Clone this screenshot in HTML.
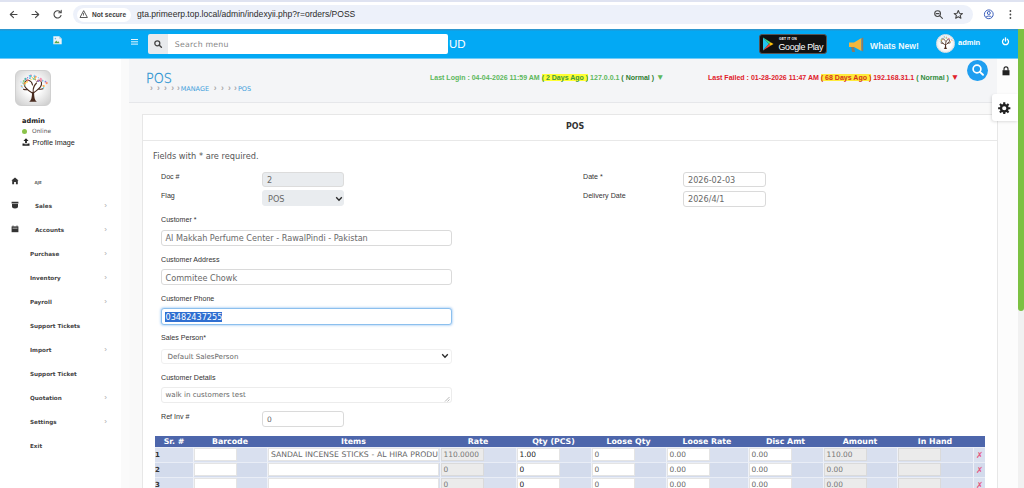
<!DOCTYPE html>
<html lang="en">
<head>
<meta charset="utf-8">
<title>POS</title>
<style>
*{box-sizing:border-box;margin:0;padding:0}
html,body{width:1024px;height:488px;overflow:hidden;background:#fff}
body{position:relative;font-family:"Liberation Sans",sans-serif;color:#333}
.abs{position:absolute}
.v{font-family:"DejaVu Sans","Liberation Sans",sans-serif}
.t{position:absolute;white-space:nowrap;line-height:1}
/* browser chrome */
#chrome{left:0;top:0;width:1024px;height:29px;background:#fff}
#tabstrip{left:0;top:0;width:1024px;height:2px;background:#dfe3f1}
#pill{left:73px;top:5px;width:900px;height:19px;border-radius:10px;background:#edf1fa}
#chip{left:77px;top:8px;width:54px;height:14px;border-radius:7px;background:#fff}
/* app header */
#hdr{left:0;top:29px;width:1018px;height:29px;background:linear-gradient(#3a93c6 0,#1a9cdc 1.2px,#03a9f4 2.4px);}
#sb{left:0;top:58px;width:121px;height:430px;background:#fff}
#strip{left:121px;top:58px;width:8px;height:430px;background:#fafafa}
#content{left:129px;top:58px;width:868px;height:45px;background:#f4f5f7;border-bottom:1px solid #e6e7ea}
#content2{left:129px;top:103px;width:868px;height:386px;background:#f9f9f9}
#rightcol{left:997px;top:58px;width:21px;height:430px;background:#fcfcfc}
#scroll{left:1018px;top:29px;width:6px;height:459px;background:#f1f1f1}
#thumb{left:1018px;top:29px;width:6px;height:282px;background:#7cc142;border-radius:0 0 3px 3px}
#panel{left:142px;top:114px;width:856px;height:380px;background:#fff;border:1px solid #e7e7e7}
#phead{left:143px;top:140px;width:854px;height:1px;background:#e8e8e8}
.lbl{font-size:8px;color:#333;margin-top:.6px;transform:scaleX(.888);transform-origin:0 0}
.inp{position:absolute;border:1px solid #dadada;border-radius:3px;background:#fff}
.inp.g{background:#e9ecef;border-color:#dcdcdc}
.itx{position:absolute;white-space:nowrap;line-height:1;font-family:"DejaVu Sans","Liberation Sans",sans-serif;font-size:8.15px;color:#686868}
.menu{position:absolute;white-space:nowrap;line-height:1;font-family:"DejaVu Sans","Liberation Sans",sans-serif;font-weight:bold;font-size:5.65px;color:#444}
.chev{position:absolute;font-size:8px;line-height:1;color:#aaa;left:104.3px}
.bc{display:inline-block;width:7.1px;text-align:center;color:#9a9a9a;font-family:"Liberation Sans",sans-serif;font-weight:bold;font-size:8.5px;line-height:6px;vertical-align:baseline;opacity:.85}
/* table */
#tbl{position:absolute;left:155px;top:436px;border-collapse:separate;border-spacing:0;table-layout:fixed;width:830px}
#tbl th{height:11px;background:#4d66ab;color:#fff;font-family:"DejaVu Sans","Liberation Sans",sans-serif;font-weight:bold;font-size:7.85px;line-height:11px;text-align:center;padding:0}
#tbl td{height:15px;padding:0;position:relative;font-family:"DejaVu Sans","Liberation Sans",sans-serif;font-size:8px;border-left:1px solid #eef1f8;border-top:1px solid #e9edf6}
#tbl td:first-child{border-left:0}
#tbl tr.a td{background:#d9e0ef}
#tbl tr.b td{background:#d3dbec}
.ci{position:absolute;left:0;top:0;height:13px;width:43px;background:#fff;border:1px solid #e4e4e4;font-size:7.45px;line-height:11.5px;padding-left:1.5px;color:#666;white-space:nowrap;overflow:hidden}
.ci.g{background:#ebebeb;border-color:#dadada;color:#777}
.sr{font-weight:bold;font-size:7px !important;line-height:14px;padding-left:0;color:#333}
.x{color:#e65580;font-size:8.5px !important;line-height:14px;text-align:center;font-style:italic}
</style>
</head>
<body>
<!-- ===== browser chrome ===== -->
<div id="chrome" class="abs"></div>
<div id="tabstrip" class="abs"></div>
<div id="pill" class="abs"></div>
<div id="chip" class="abs"></div>
<svg class="abs" style="left:0;top:0" width="1024" height="29" viewBox="0 0 1024 29">
  <g fill="none" stroke="#474747" stroke-width="1.1" stroke-linecap="round" stroke-linejoin="round">
    <path d="M17 14.5H10.5M13.5 11.3L10.3 14.5L13.5 17.7"/>
    <path d="M32 14.5H38.5M35.5 11.3L38.7 14.5L35.5 17.7"/>
    <path d="M60.6 12.4A3.6 3.6 0 1 0 61 15.5"/>
    <path d="M61.2 10.4V12.8H58.8"/>
    <path d="M83.5 11L80 17.5H87Z" stroke-width="0.9"/>
    <path d="M83.5 13.4V15.2" stroke-width="0.8"/>
    <circle cx="937.6" cy="13.6" r="2.9"/>
    <path d="M939.8 15.8L942.4 18.4M936.2 13.6H939"/>
    <path d="M958.3 10.6L959.5 13.2L962.4 13.5L960.2 15.4L960.9 18.2L958.3 16.7L955.7 18.2L956.4 15.4L954.2 13.5L957.1 13.2Z"/>
  </g>
  <g fill="none" stroke="#3f62bd" stroke-width="1">
    <circle cx="988.8" cy="14.3" r="4.4"/>
    <circle cx="988.8" cy="13" r="1.5"/>
    <path d="M985.8 17.4C986.6 15.6 991 15.6 991.8 17.4"/>
  </g>
  <g fill="#474747"><circle cx="1010.4" cy="11" r="0.9"/><circle cx="1010.4" cy="14.5" r="0.9"/><circle cx="1010.4" cy="18" r="0.9"/></g>
</svg>
<div class="t" style="left:92px;top:11.5px;font-size:6.6px;font-weight:bold;color:#3c3c3c">Not secure</div>
<div class="t" style="left:137px;top:10.3px;font-size:8.55px;color:#2b2b2b">gta.primeerp.top.local/admin/indexyii.php?r=orders/POSS</div>

<!-- ===== app header ===== -->
<div id="hdr" class="abs"></div>
<svg class="abs" style="left:52.8px;top:36.4px" width="9" height="8.5" viewBox="0 0 9 8.5"><path d="M0.3 0.3H6.2L8.7 2.8V8.2H0.3Z" fill="#eef4f8"/><path d="M6.2 0.3V2.8H8.7Z" fill="#b9d3e3"/><path d="M1.2 7.2L3.2 4.6L4.6 6L5.4 5.3L6.6 7.2Z" fill="#5aa84a"/><circle cx="2.4" cy="2.6" r=".8" fill="#6fb7e8"/></svg>
<div class="abs" style="left:130.5px;top:38.9px;width:7.6px;height:1.25px;background:#fff;box-shadow:0 2.3px 0 #fff,0 4.6px 0 #fff;opacity:.9"></div>
<div class="abs" style="left:148px;top:34px;width:20px;height:20px;background:#e8eaed;border-radius:2px 0 0 2px"></div>
<svg class="abs" style="left:153px;top:39px" width="10" height="10" viewBox="0 0 10 10"><circle cx="4.3" cy="4.3" r="2.5" fill="none" stroke="#444" stroke-width="1.3"/><path d="M6.3 6.3L8.4 8.2" stroke="#444" stroke-width="1.5" stroke-linecap="round"/></svg>
<div class="abs" style="left:168px;top:34px;width:280px;height:20px;background:#fff;border-radius:0 2px 2px 0"></div>
<div class="t v" style="left:174.8px;top:41.2px;font-size:7.8px;color:#858585;letter-spacing:.2px">Search menu</div>
<div class="t" style="left:449px;top:39px;font-size:11.5px;color:#fff">UD</div>
<!-- google play badge -->
<div class="abs" style="left:759px;top:34px;width:68px;height:20px;background:#111;border-radius:3px;border:0.5px solid #555"></div>
<svg class="abs" style="left:762px;top:37px" width="12" height="14" viewBox="0 0 12 14"><path d="M1 0.5L7 7L1 13.5Z" fill="#22c3f0"/><path d="M1 0.5L8.6 5.2L7 7Z" fill="#3ddc84"/><path d="M1 13.5L8.6 8.8L7 7Z" fill="#f44336"/><path d="M8.6 5.2L11.5 7L8.6 8.8L7 7Z" fill="#ffc107"/></svg>
<div class="t" style="left:779px;top:37.8px;font-size:3.4px;color:#fff;font-weight:bold;letter-spacing:.1px">GET IT ON</div>
<div class="t" style="left:778.5px;top:43px;font-size:8.9px;color:#fff;letter-spacing:-.35px">Google Play</div>
<!-- megaphone -->
<svg class="abs" style="left:848px;top:37px" width="18" height="17" viewBox="0 0 18 17"><path d="M1 5.5H6L13.5 1V14L6 10H1Z" fill="#f5b63c"/><path d="M13.5 1.2L15.2 0.5V14.5L13.5 13.8Z" fill="#8d7a66"/><path d="M3 10H6L7 15H4.2Z" fill="#8d7a66"/></svg>
<div class="t" style="left:870px;top:42.2px;font-size:8.65px;color:#fff;font-weight:bold;opacity:.92">Whats New!</div>
<!-- avatar small -->
<div class="abs" style="left:935.5px;top:33.5px;width:19px;height:19px;border-radius:50%;background:radial-gradient(circle,#fff 45%,#d8d8d8 100%);border:1px solid #e4e4e4"></div>
<svg class="abs" style="left:937.5px;top:35.3px" width="15" height="15" viewBox="0 0 32 32"><path d="M12 29.8C14.3 28.8 15 25 15.1 20L17.1 20C17.1 25 17.8 28.8 20 29.8Z" fill="#4a2c20"/><path d="M16 21.5C10 18 5.5 14 8 10C10 7.2 14.5 8 15.5 13M16 21.5C18.5 18.5 25.5 16.5 24.5 10.5C24 8 21 7.5 20 9.5M16.2 20C15.8 16 17.5 13 19.5 11M11 17.8C9.5 17.6 8 18 6.5 17.2M21 17.2C23 17 24.5 17.6 26 16.8" stroke="#4a2c20" stroke-width="1.8" fill="none" stroke-linecap="round"/><g><circle cx="10.6" cy="8.3" r="1.1" fill="#e57373"/><circle cx="4.5" cy="13.9" r="0.9" fill="#90caf9"/><circle cx="4.7" cy="14.4" r="0.7" fill="#ffb74d"/><circle cx="14.0" cy="7.5" r="0.7" fill="#ffd54f"/><circle cx="12.4" cy="3.8" r="0.7" fill="#64b5f6"/><circle cx="21.4" cy="5.7" r="0.7" fill="#90caf9"/><circle cx="18.5" cy="7.7" r="0.7" fill="#e57373"/><circle cx="17.8" cy="7.1" r="0.9" fill="#81c784"/><circle cx="17.7" cy="4.8" r="1.1" fill="#4db6ac"/><circle cx="21.3" cy="8.6" r="1.1" fill="#ff8a65"/><circle cx="8.2" cy="11.1" r="1.1" fill="#ffb74d"/><circle cx="18.8" cy="4.7" r="0.9" fill="#ff8a65"/><circle cx="17.5" cy="3.7" r="0.9" fill="#90caf9"/><circle cx="26.3" cy="13.8" r="0.7" fill="#f48fb1"/><circle cx="4.0" cy="9.9" r="0.7" fill="#90caf9"/><circle cx="8.5" cy="7.4" r="0.9" fill="#9575cd"/><circle cx="13.8" cy="4.7" r="0.7" fill="#ffb74d"/><circle cx="16.4" cy="6.8" r="0.9" fill="#81c784"/><circle cx="26.7" cy="14.1" r="1.1" fill="#ffb74d"/><circle cx="25.6" cy="8.7" r="0.9" fill="#4dd0e1"/><circle cx="23.7" cy="6.9" r="1.1" fill="#f48fb1"/><circle cx="13.9" cy="3.5" r="0.9" fill="#f06292"/><circle cx="21.5" cy="9.0" r="1.1" fill="#9575cd"/><circle cx="8.5" cy="6.8" r="1.1" fill="#4db6ac"/><circle cx="13.5" cy="4.2" r="1.1" fill="#4dd0e1"/><circle cx="5.2" cy="15.5" r="0.7" fill="#90caf9"/><circle cx="7.8" cy="12.8" r="0.9" fill="#81c784"/><circle cx="24.1" cy="8.6" r="0.9" fill="#ffb74d"/><circle cx="6.1" cy="11.1" r="0.9" fill="#81c784"/><circle cx="28.5" cy="9.7" r="0.9" fill="#9575cd"/><circle cx="12.9" cy="6.2" r="0.9" fill="#64b5f6"/><circle cx="7.3" cy="11.9" r="0.7" fill="#ff8a65"/><circle cx="6.8" cy="9.0" r="1.1" fill="#81c784"/><circle cx="9.9" cy="9.9" r="0.9" fill="#ffd54f"/><circle cx="10.6" cy="5.8" r="0.7" fill="#9575cd"/><circle cx="29.7" cy="11.1" r="1.1" fill="#ff8a65"/><circle cx="24.4" cy="8.4" r="1.1" fill="#f48fb1"/><circle cx="18.3" cy="5.8" r="0.9" fill="#ffb74d"/><circle cx="15.3" cy="5.6" r="0.7" fill="#ffb74d"/><circle cx="26.6" cy="15.7" r="0.7" fill="#4dd0e1"/></g></svg>
<div class="t" style="left:958px;top:38.8px;font-size:7.5px;color:#fff;font-weight:bold">admin</div>
<svg class="abs" style="left:1001px;top:37px" width="9" height="9" viewBox="0 0 9 9"><path d="M2.7 2.3A3 3 0 1 0 6.3 2.3" fill="none" stroke="#fff" stroke-width="1.3" stroke-linecap="round"/><path d="M4.5 0.8V4" stroke="#fff" stroke-width="1.3" stroke-linecap="round"/></svg>

<!-- ===== backgrounds ===== -->
<div id="sb" class="abs"></div>
<div id="strip" class="abs"></div>
<div id="content" class="abs"></div>
<div id="content2" class="abs"></div>
<div id="rightcol" class="abs"></div>
<div id="scroll" class="abs"></div>
<div id="thumb" class="abs"></div>
<div class="abs" style="left:0;top:58px;width:1018px;height:1px;background:#6fcbf8"></div>

<!-- ===== sidebar ===== -->
<div class="abs" style="left:15px;top:70px;width:36px;height:36px;border-radius:6px;background:radial-gradient(circle at 50% 45%,#fff 30%,#c9c9c9 100%);border:1px solid #d0d0d0"></div>
<svg class="abs" style="left:17px;top:72px" width="32" height="32" viewBox="0 0 32 32"><path d="M12 29.8C14.3 28.8 15 25 15.1 20L17.1 20C17.1 25 17.8 28.8 20 29.8Z" fill="#4a2c20"/><path d="M16 21.5C10 18 5.5 14 8 10C10 7.2 14.5 8 15.5 13M16 21.5C18.5 18.5 25.5 16.5 24.5 10.5C24 8 21 7.5 20 9.5M16.2 20C15.8 16 17.5 13 19.5 11M11 17.8C9.5 17.6 8 18 6.5 17.2M21 17.2C23 17 24.5 17.6 26 16.8" stroke="#4a2c20" stroke-width="1.1" fill="none" stroke-linecap="round"/><g><circle cx="10.6" cy="8.3" r="1.1" fill="#e57373"/><circle cx="4.5" cy="13.9" r="0.9" fill="#90caf9"/><circle cx="4.7" cy="14.4" r="0.7" fill="#ffb74d"/><circle cx="14.0" cy="7.5" r="0.7" fill="#ffd54f"/><circle cx="12.4" cy="3.8" r="0.7" fill="#64b5f6"/><circle cx="21.4" cy="5.7" r="0.7" fill="#90caf9"/><circle cx="18.5" cy="7.7" r="0.7" fill="#e57373"/><circle cx="17.8" cy="7.1" r="0.9" fill="#81c784"/><circle cx="17.7" cy="4.8" r="1.1" fill="#4db6ac"/><circle cx="21.3" cy="8.6" r="1.1" fill="#ff8a65"/><circle cx="8.2" cy="11.1" r="1.1" fill="#ffb74d"/><circle cx="18.8" cy="4.7" r="0.9" fill="#ff8a65"/><circle cx="17.5" cy="3.7" r="0.9" fill="#90caf9"/><circle cx="26.3" cy="13.8" r="0.7" fill="#f48fb1"/><circle cx="4.0" cy="9.9" r="0.7" fill="#90caf9"/><circle cx="8.5" cy="7.4" r="0.9" fill="#9575cd"/><circle cx="13.8" cy="4.7" r="0.7" fill="#ffb74d"/><circle cx="16.4" cy="6.8" r="0.9" fill="#81c784"/><circle cx="26.7" cy="14.1" r="1.1" fill="#ffb74d"/><circle cx="25.6" cy="8.7" r="0.9" fill="#4dd0e1"/><circle cx="23.7" cy="6.9" r="1.1" fill="#f48fb1"/><circle cx="13.9" cy="3.5" r="0.9" fill="#f06292"/><circle cx="21.5" cy="9.0" r="1.1" fill="#9575cd"/><circle cx="8.5" cy="6.8" r="1.1" fill="#4db6ac"/><circle cx="13.5" cy="4.2" r="1.1" fill="#4dd0e1"/><circle cx="5.2" cy="15.5" r="0.7" fill="#90caf9"/><circle cx="7.8" cy="12.8" r="0.9" fill="#81c784"/><circle cx="24.1" cy="8.6" r="0.9" fill="#ffb74d"/><circle cx="6.1" cy="11.1" r="0.9" fill="#81c784"/><circle cx="28.5" cy="9.7" r="0.9" fill="#9575cd"/><circle cx="12.9" cy="6.2" r="0.9" fill="#64b5f6"/><circle cx="7.3" cy="11.9" r="0.7" fill="#ff8a65"/><circle cx="6.8" cy="9.0" r="1.1" fill="#81c784"/><circle cx="9.9" cy="9.9" r="0.9" fill="#ffd54f"/><circle cx="10.6" cy="5.8" r="0.7" fill="#9575cd"/><circle cx="29.7" cy="11.1" r="1.1" fill="#ff8a65"/><circle cx="24.4" cy="8.4" r="1.1" fill="#f48fb1"/><circle cx="18.3" cy="5.8" r="0.9" fill="#ffb74d"/><circle cx="15.3" cy="5.6" r="0.7" fill="#ffb74d"/><circle cx="26.6" cy="15.7" r="0.7" fill="#4dd0e1"/></g></svg>
<div class="t v" style="left:22px;top:117.7px;font-size:6.6px;font-weight:bold;color:#222">admin</div>
<div class="abs" style="left:22px;top:129px;width:5px;height:5px;border-radius:50%;background:#8bc34a"></div>
<div class="t v" style="left:32px;top:128.8px;font-size:5.9px;color:#555">Online</div>
<svg class="abs" style="left:22px;top:138px" width="8" height="8" viewBox="0 0 8 8"><path d="M4 0.3L6.6 3H4.9V5.2H3.1V3H1.4Z" fill="#222"/><path d="M0.5 5.6H2.5V6.3H5.5V5.6H7.5V7.7H0.5Z" fill="#222"/></svg>
<div class="t" style="left:32.5px;top:139px;font-size:7.2px;color:#222">Profile Image</div>

<!-- menu -->
<svg class="abs" style="left:11px;top:177px" width="8" height="8" viewBox="0 0 8 8"><path d="M4 0.5L7.6 3.6H6.8V7.3H4.9V5H3.1V7.3H1.2V3.6H0.4Z" fill="#333"/></svg>
<svg class="abs" style="left:11px;top:201px" width="8" height="8" viewBox="0 0 8 8"><path d="M0.6 0.8H7.4V2.6H0.6ZM1 3H7V5.5Q7 7.4 4 7.4Q1 7.4 1 5.5Z" fill="#333"/></svg>
<svg class="abs" style="left:11px;top:225px" width="8" height="8" viewBox="0 0 8 8"><path d="M0.6 1.4H7.4V7.2H0.6Z" fill="#333"/><path d="M1.5 3.2H6.5" stroke="#fff" stroke-width=".6"/><path d="M2 0.6V1.6M6 0.6V1.6" stroke="#333" stroke-width="1"/></svg>
<div class="menu" style="left:34.5px;top:180.8px;font-size:4px;color:#666">AJE</div>
<div class="menu" style="left:35px;top:203.8px">Sales</div><div class="chev" style="top:201.6px">›</div>
<div class="menu" style="left:35px;top:227.8px">Accounts</div><div class="chev" style="top:225.6px">›</div>
<div class="menu" style="left:30px;top:251.8px">Purchase</div><div class="chev" style="top:249.6px">›</div>
<div class="menu" style="left:30px;top:275.8px">Inventory</div><div class="chev" style="top:273.6px">›</div>
<div class="menu" style="left:30px;top:299.8px">Payroll</div><div class="chev" style="top:297.6px">›</div>
<div class="menu" style="left:30px;top:323.8px">Support Tickets</div>
<div class="menu" style="left:30px;top:347.8px">Import</div><div class="chev" style="top:345.6px">›</div>
<div class="menu" style="left:30px;top:371.8px">Support Ticket</div>
<div class="menu" style="left:30px;top:395.8px">Quotation</div><div class="chev" style="top:393.6px">›</div>
<div class="menu" style="left:30px;top:419.8px">Settings</div><div class="chev" style="top:417.6px">›</div>
<div class="menu" style="left:30px;top:443.8px">Exit</div>

<!-- ===== content header ===== -->
<div class="t" style="left:146px;top:70.8px;font-family:'DejaVu Sans Light','DejaVu Sans','Liberation Sans',sans-serif;font-weight:200;font-size:14.7px;color:#2f95d2;-webkit-text-stroke:.35px #2f95d2;transform:scaleX(.87);transform-origin:0 0">POS</div>
<div class="t v" style="left:147.8px;top:84.6px;font-size:6.5px;color:#3fa0dc"><span class="bc">›</span><span class="bc">›</span><span class="bc">›</span><span class="bc">›</span><span class="bc" style="width:4.5px">›</span>MANAGE<span class="bc" style="margin-left:2.6px">›</span><span class="bc">›</span><span class="bc">›</span><span class="bc" style="width:5px">›</span>POS</div>
<div class="t" style="left:430px;top:73.8px;font-size:7.03px;font-weight:bold;color:#5cb85c">Last Login : 04-04-2026 11:59 AM <span style="background:#ffff33;color:#3d9a3d">( 2 Days Ago )</span> 127.0.0.1 <span style="color:#2e7d32">( Normal )</span> <span style="font-size:8.5px;line-height:0">▼</span></div>
<div class="t" style="left:708px;top:73.8px;font-size:7.03px;font-weight:bold;color:#e0202a">Last Failed : 01-28-2026 11:47 AM <span style="background:#ffeb3b;color:#d4331a">( 68 Days Ago )</span> 192.168.31.1 <span style="color:#2e8b3a">( Normal )</span> <span style="font-size:8.5px;line-height:0">▼</span></div>
<div class="abs" style="left:967.4px;top:60px;width:20.8px;height:20.8px;border-radius:50%;background:#1f9ef0;z-index:2"></div>
<svg class="abs" style="left:971px;top:63px;z-index:3" width="14" height="14" viewBox="0 0 14 14"><circle cx="6" cy="6" r="3.9" fill="none" stroke="#fff" stroke-width="1.7"/><path d="M8.9 8.9L12 11.8" stroke="#fff" stroke-width="1.9" stroke-linecap="round"/></svg>
<svg class="abs" style="left:1002px;top:66px" width="8" height="10" viewBox="0 0 8 10"><path d="M0.5 4.2H7.5V9.3H0.5Z" fill="#222"/><path d="M2 4.4V2.9A2 2 0 0 1 6 2.9V4.4" fill="none" stroke="#222" stroke-width="1.1"/></svg>
<!-- ===== panel ===== -->
<div id="panel" class="abs"></div>
<div id="phead" class="abs"></div>
<div class="t" style="left:566px;top:122.2px;font-family:'DejaVu Sans Condensed','DejaVu Sans','Liberation Sans',sans-serif;font-size:8.8px;font-weight:bold;color:#333">POS</div>
<div class="t v" style="left:153px;top:152px;font-size:8.23px;color:#555">Fields with * are required.</div>

<div class="abs" style="left:992px;top:94px;width:26px;height:26.5px;background:#fff;border-radius:3px 0 0 3px;box-shadow:-1px 1px 3px rgba(0,0,0,.13)"></div>
<svg class="abs" style="left:998.4px;top:101.6px" width="12.5" height="12.5" viewBox="0 0 12.5 12.5"><path fill-rule="evenodd" d="M5.13 1.89L5.18 0.14L7.32 0.14L7.37 1.89L8.54 2.38L9.82 1.18L11.32 2.68L10.12 3.96L10.61 5.13L12.36 5.18L12.36 7.32L10.61 7.37L10.12 8.54L11.32 9.82L9.82 11.32L8.54 10.12L7.37 10.61L7.32 12.36L5.18 12.36L5.13 10.61L3.96 10.12L2.68 11.32L1.18 9.82L2.38 8.54L1.89 7.37L0.14 7.32L0.14 5.18L1.89 5.13L2.38 3.96L1.18 2.68L2.68 1.18L3.96 2.38Z M6.25 4.15A2.1 2.1 0 1 0 6.25 8.35A2.1 2.1 0 1 0 6.25 4.15Z" fill="#222"/></svg>
<div class="t lbl" style="left:161px;top:172px">Doc #</div>
<div class="inp g" style="left:262px;top:171.5px;width:82px;height:15.6px"></div>
<div class="itx" style="left:267px;top:176px">2</div>
<div class="t lbl" style="left:161px;top:191px">Flag</div>
<div class="inp g" style="left:262px;top:190.3px;width:82px;height:15.5px;border-color:#e9ecef"></div>
<div class="itx" style="left:268px;top:195px">POS</div>
<svg class="abs" style="left:335px;top:196px" width="8" height="6" viewBox="0 0 8 6"><path d="M1.2 1.2L4 4.2L6.8 1.2" fill="none" stroke="#2a2a2a" stroke-width="1.3"/></svg>

<div class="t lbl" style="left:161px;top:215px">Customer *</div>
<div class="inp" style="left:161px;top:230.3px;width:291px;height:15.5px"></div>
<div class="itx" style="left:165.5px;top:234px">Al Makkah Perfume Center - RawalPindi - Pakistan</div>
<div class="t lbl" style="left:161px;top:255px">Customer Address</div>
<div class="inp" style="left:161px;top:269.3px;width:291px;height:15.6px"></div>
<div class="itx" style="left:165.5px;top:273.5px">Commitee Chowk</div>
<div class="t lbl" style="left:161px;top:294.5px">Customer Phone</div>
<div class="inp" style="left:161px;top:308px;width:291px;height:17px;border-color:#8cc0ee;box-shadow:0 0 2px 1px rgba(120,180,240,.45)"></div>
<div class="abs" style="left:165px;top:312px;width:57px;height:9.5px;background:#2f6fd1"></div>
<div class="itx" style="left:165.5px;top:312.5px;color:#fff">03482437255</div>
<div class="t lbl" style="left:161px;top:333.5px">Sales Person*</div>
<div class="inp" style="left:161px;top:348.5px;width:291px;height:15.5px;border-color:#f0f0f0"></div>
<div class="itx" style="left:167.5px;top:352.5px;font-size:7.1px">Default SalesPerson</div>
<svg class="abs" style="left:441px;top:353px" width="8" height="6" viewBox="0 0 8 6"><path d="M1.2 1.2L4 4.2L6.8 1.2" fill="none" stroke="#2a2a2a" stroke-width="1.3"/></svg>
<div class="t lbl" style="left:161px;top:373px">Customer Details</div>
<div class="inp" style="left:161px;top:387.2px;width:291px;height:15.5px;border-color:#ececec"></div>
<div class="itx" style="left:165.5px;top:391px;font-size:7.1px">walk in customers test</div>
<svg class="abs" style="left:444px;top:396px" width="6" height="6" viewBox="0 0 6 6"><path d="M5.5 1L1 5.5M5.5 3.5L3.5 5.5" stroke="#999" stroke-width=".7"/></svg>
<div class="t lbl" style="left:161px;top:412px">Ref Inv #</div>
<div class="inp" style="left:262px;top:411.2px;width:82px;height:15.8px"></div>
<div class="itx" style="left:267px;top:415.5px;font-size:7.5px">0</div>

<div class="t lbl" style="left:582.5px;top:172px">Date *</div>
<div class="inp" style="left:683px;top:171.7px;width:82.5px;height:15.8px"></div>
<div class="itx" style="left:688px;top:176px">2026-02-03</div>
<div class="t lbl" style="left:582.5px;top:191px">Delivery Date</div>
<div class="inp" style="left:683px;top:191px;width:82.5px;height:15.8px"></div>
<div class="itx" style="left:688px;top:195px">2026/4/1</div>

<!-- ===== table ===== -->
<table id="tbl">
<colgroup><col style="width:38px"><col style="width:74px"><col style="width:173px"><col style="width:76px"><col style="width:75px"><col style="width:75px"><col style="width:82px"><col style="width:75px"><col style="width:74px"><col style="width:76px"><col style="width:12px"></colgroup>
<tr><th>Sr. #</th><th>Barcode</th><th>Items</th><th>Rate</th><th>Qty (PCS)</th><th>Loose Qty</th><th>Loose Rate</th><th>Disc Amt</th><th>Amount</th><th>In Hand</th><th></th></tr>
<tr class="a"><td class="sr">1</td><td><div class="ci"></div></td><td><div class="ci" style="width:171px;font-size:7.7px;word-spacing:.3px;padding-left:2px">SANDAL INCENSE STICKS - AL HIRA PRODUCTS</div></td><td><div class="ci g">110.0000</div></td><td><div class="ci" style="color:#222">1.00</div></td><td><div class="ci">0</div></td><td><div class="ci">0.00</div></td><td><div class="ci">0.00</div></td><td><div class="ci g">110.00</div></td><td><div class="ci g"></div></td><td class="x">✗</td></tr>
<tr class="b"><td class="sr">2</td><td><div class="ci"></div></td><td><div class="ci" style="width:171px"></div></td><td><div class="ci g">0</div></td><td><div class="ci" style="color:#222">0</div></td><td><div class="ci">0</div></td><td><div class="ci">0.00</div></td><td><div class="ci">0.00</div></td><td><div class="ci g">0.00</div></td><td><div class="ci g"></div></td><td class="x">✗</td></tr>
<tr class="a"><td class="sr">3</td><td><div class="ci"></div></td><td><div class="ci" style="width:171px"></div></td><td><div class="ci g">0</div></td><td><div class="ci" style="color:#222">0</div></td><td><div class="ci">0</div></td><td><div class="ci">0.00</div></td><td><div class="ci">0.00</div></td><td><div class="ci g">0.00</div></td><td><div class="ci g"></div></td><td class="x">✗</td></tr>
</table>
</body>
</html>
